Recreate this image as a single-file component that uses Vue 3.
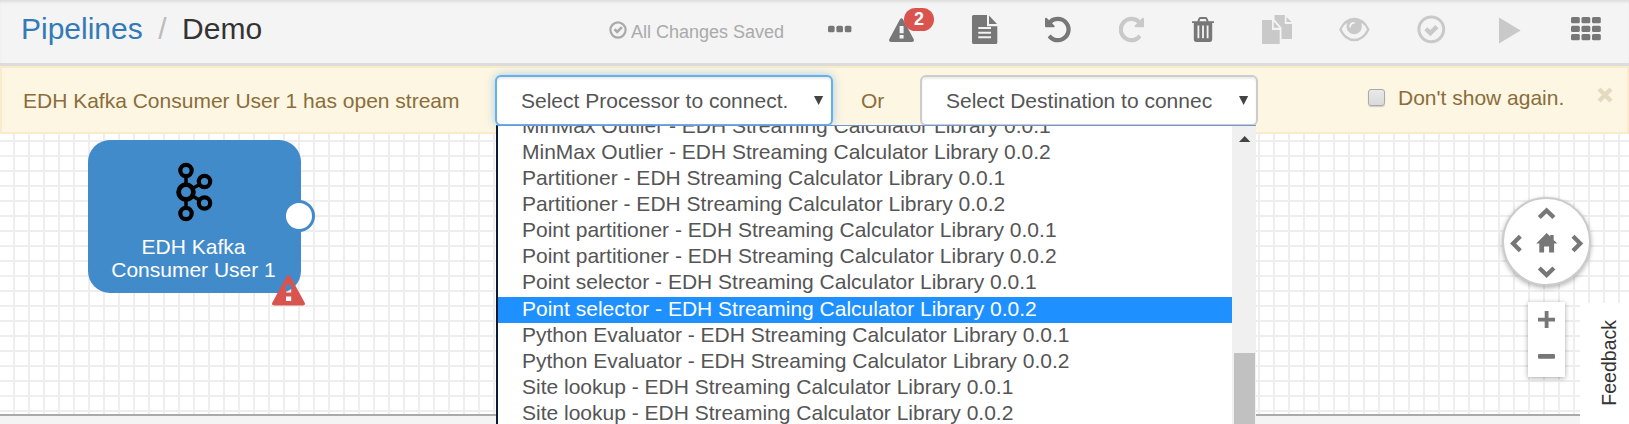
<script setup>
const options = [
  { name: 'MinMax Outlier', version: '0.0.1' },
  { name: 'MinMax Outlier', version: '0.0.2' },
  { name: 'Partitioner', version: '0.0.1' },
  { name: 'Partitioner', version: '0.0.2' },
  { name: 'Point partitioner', version: '0.0.1' },
  { name: 'Point partitioner', version: '0.0.2' },
  { name: 'Point selector', version: '0.0.1' },
  { name: 'Point selector', version: '0.0.2', selected: true },
  { name: 'Python Evaluator', version: '0.0.1' },
  { name: 'Python Evaluator', version: '0.0.2' },
  { name: 'Site lookup', version: '0.0.1' },
  { name: 'Site lookup', version: '0.0.2' },
]
const appCells = [0, 10.5, 21].flatMap((x) => [9, 17.7, 26].map((y) => ({ x, y })))
</script>

<template>
  <div class="page">
    <header class="toolbar">
      <nav class="crumbs">
        <a class="link">Pipelines</a><span class="slash">/</span><span class="current">Demo</span>
      </nav>
      <div class="saved">
        <svg width="18" height="18" viewBox="0 0 18 18"><circle cx="9" cy="9" r="7.6" fill="none" stroke="#aaa" stroke-width="2.2" /><path d="M4.6 9.2l1.9-1.9 1.7 1.7 3.8-3.7 1.8 1.8-5.6 5.6z" fill="#aaa" /></svg>
        <span>All Changes Saved</span>
      </div>
      <div class="tools">
        <svg width="24" height="40" fill="#777"><rect x="0" y="17.7" width="6.6" height="6.6" rx="1.6" /><rect x="8.4" y="17.7" width="6.6" height="6.6" rx="1.6" /><rect x="16.8" y="17.7" width="6.6" height="6.6" rx="1.6" /></svg>
        <div class="issues">
          <svg width="26" height="40"><path fill="#777" fill-rule="evenodd" d="M11 11.2q1.5-2 3 0L24.6 31q1.2 3-1.6 3H2Q-.8 34 .4 31zM10.6 18v7.2h4V18zM10.6 27v3.6h4V27z" /></svg>
          <span class="badge">2</span>
        </div>
        <svg width="26" height="40"><path fill="#777" d="M1.5 7H15v11.2h10.3v16.3q0 1.5-1.5 1.5h-22Q0 36 0 34.500V8.500Q0 7 1.500 7zM17 7.500L25 16h-8z" /><path fill="#f4f4f4" d="M6.300 19h12.700v2H6.300zM6.300 23.700h12.700v2H6.300zM6.300 28.300h12.700v2H6.300z" /></svg>
        <svg width="26" height="40"><path transform="translate(0 6.5) scale(.01674)" fill="#777" d="M1536 896q0 156-61 298t-164 245-245 164-298 61q-172 0-327-72.500t-264-204.500q-7-10-6.500-22.500t8.500-20.500l137-138q10-9 25-9 16 2 23 12 73 95 179 147t225 52q104 0 198.500-40.500t163.500-109.500 109.500-163.500 40.500-198.500-40.500-198.500-109.500-163.500-163.500-109.500-198.500-40.500q-98 0-188 35.500t-160 101.500l137 138q31 30 14 69-17 40-59 40h-448q-26 0-45-19t-19-45v-448q0-42 40-59 39-17 69 14l130 129q107-101 244.500-156.500t284.500-55.500q156 0 298 61t245 164 164 245 61 298z" /></svg>
        <svg width="26" height="40"><path transform="translate(25 6.5) scale(-.01644 .01674)" fill="#c9c9c9" d="M1536 896q0 156-61 298t-164 245-245 164-298 61q-172 0-327-72.500t-264-204.500q-7-10-6.500-22.500t8.500-20.500l137-138q10-9 25-9 16 2 23 12 73 95 179 147t225 52q104 0 198.500-40.500t163.500-109.500 109.500-163.500 40.500-198.500-40.500-198.500-109.500-163.500-163.500-109.500-198.500-40.500q-98 0-188 35.500t-160 101.500l137 138q31 30 14 69-17 40-59 40h-448q-26 0-45-19t-19-45v-448q0-42 40-59 39-17 69 14l130 129q107-101 244.500-156.500t284.500-55.500q156 0 298 61t245 164 164 245 61 298z" /></svg>
        <svg width="24" height="40"><path fill="#777" fill-rule="evenodd" d="M0 13.200h5.300l1.300-3Q7.100 9 8.500 9h5q1.400 0 1.900 1.200l1.300 3H22V15h-1.800v16q0 3-2.500 3H4.300Q1.800 34 1.800 31V15H0zM7.400 13.200h7.200l-.9-2.200H8.300zM5.500 17.500v12.800h1.800V17.500zM10.100 17.500v12.800h1.800V17.500zM14.700 17.500v12.800h1.800V17.500z" /></svg>
        <svg width="31" height="40" fill="#c9c9c9"><path d="M0 12h10v10h7.700v14H0z" /><path d="M11.700 13.500v6.300h5.600z" /><path d="M12.500 7h10.300v9H30v15H19.500V19.500l-7-8z" /><path d="M24.500 9v5h5z" /></svg>
        <svg width="31" height="40"><path fill="#c9c9c9" fill-rule="evenodd" d="M0 21.500Q5.500 9.700 15.300 9.700T30.700 21.500Q25 33.300 15.300 33.300T0 21.500zM2.700 21.500Q7.500 30.800 15.300 30.800T28 21.500Q26 17 22.300 14.700q.5 1.600.5 4a7.600 7.600 0 0 1-15.200 0q0-2.400.6-4Q4.500 17 2.700 21.500zM15 14q-4.700 0-4.700 4.500 0 .9.900.9t.9-.9q0-2.800 2.900-2.800.9 0 .9-.8T15 14z" /></svg>
        <svg width="29" height="40"><circle cx="14.300" cy="21.300" r="12.400" fill="none" stroke="#c9c9c9" stroke-width="3" /><path d="M7.300 22.200l3-3 3 2.800 5-5 3.200 3.200-8.200 8z" fill="#c9c9c9" /></svg>
        <svg width="23" height="40"><path d="M0 9.500L21.700 22.500 0 35.600z" fill="#c9c9c9" /></svg>
        <svg width="31" height="40" fill="#777"><rect v-for="(c, i) in appCells" :key="i" :x="c.x" :y="c.y" width="8.800" height="6.300" rx="1.500" /></svg>
      </div>
    </header>

    <section class="alert">
      <span class="message">EDH Kafka Consumer User 1 has open stream</span>
      <div class="select focused"><span class="value">Select Processor to connect.</span><svg class="caret" width="10" height="9"><path d="M0 0h9.200L4.600 9z" fill="#444" /></svg></div>
      <span class="or">Or</span>
      <div class="select"><span class="value">Select Destination to connec</span><svg class="caret" width="10" height="9"><path d="M0 0h9.200L4.600 9z" fill="#444" /></svg></div>
      <label class="again"><i class="box"></i><span>Don't show again.</span></label>
      <svg class="close" width="16" height="16"><path d="M2 2l12 12M14 2L2 14" stroke="#e4dac0" stroke-width="4.400" /></svg>
    </section>

    <main class="canvas">
      <div class="stage">
        <svg width="213" height="153">
          <g stroke="#000" fill="none">
            <path d="M98 37.500v35M98 52L117 41.500M98 52L117 63.500" stroke-width="3.500" />
            <g fill="#428bca" stroke-width="4.200">
              <circle cx="98" cy="30.500" r="5.700" /><circle cx="98" cy="73.500" r="5.700" /><circle cx="116.500" cy="41.500" r="5.700" /><circle cx="116.500" cy="63" r="5.700" />
              <circle cx="98" cy="52.100" r="7.400" stroke-width="4.800" />
            </g>
          </g>
        </svg>
        <div class="label">EDH Kafka<br />Consumer User 1</div>
        <i class="port"></i>
        <svg class="error" width="33" height="31"><path fill="#d9534f" fill-rule="evenodd" d="M14.600 1.500q1.900-3 3.800 0L32.600 27.500q1.400 3-1.800 3H2.200q-3.200 0-1.800-3zM14 10v7.500h5.200V10zM14 21.500V26h5.200v-4.500z" /></svg>
      </div>

      <div class="pan">
        <svg width="85" height="85" viewBox="2 2 85 85">
          <g fill="none" stroke="#777" stroke-width="4.300"><path d="M37.300 20.500l7.300-7 7.300 7M37.300 71l7.300 7 7.300-7M18.300 39.300l-7.200 7.200 7.200 7.200M71 39.300l7.200 7.200-7.200 7.200" /></g>
          <path fill="#777" d="M34.200 46.500l10.500-10.500 3.500 3.500v-1.500h3.500V43l3.600 3.500h-3.200v9h-5v-6h-5v6h-4.800v-9z" />
        </svg>
      </div>
      <div class="zoom">
        <svg width="17" height="17"><path d="M6.700 0h3.800v6.700H17v3.800h-6.500V17H6.700v-6.500H0V6.700h6.700z" fill="#777" /></svg>
        <svg width="17" height="5"><rect width="17" height="4.800" rx="1" fill="#777" /></svg>
      </div>
    </main>
    <footer class="bottom"></footer>

    <div class="menu">
      <div class="options">
        <div v-for="o in options" :key="o.name + o.version" class="option" :class="{ selected: o.selected }">{{ o.name }} - EDH Streaming Calculator Library {{ o.version }}</div>
      </div>
      <div class="scroll">
        <svg width="12" height="6"><path d="M0 6L5.700 0l5.700 6z" fill="#444" /></svg>
        <div class="thumb"></div>
      </div>
    </div>
    <div class="feedback"><span>Feedback</span></div>
  </div>
</template>

<style>
body { overflow: hidden; }
</style>

<style scoped>
* { box-sizing: border-box; }
svg { display: block; flex: none; }
.page { position: relative; width: 1629px; height: 424px; overflow: hidden; display: flex; flex-direction: column; font: 21px/30px "Liberation Sans", Arial, sans-serif; white-space: nowrap; color: #333; background: #f4f4f4; }
.toolbar { display: flex; height: 66px; flex: none; border-bottom: 3px solid #dcdcdc; background: #f4f4f4; box-shadow: inset 0 3px 3px -1px #ddd; }
.crumbs { width: 609px; padding: 9px 0 0 21px; font-size: 30px; line-height: 40px; }
.link { color: #337ab7; }
.slash { color: #bbb; margin: 0 15.5px; }
.saved { width: 219px; display: flex; padding-top: 21px; gap: 4px; color: #aaa; font-size: 18px; line-height: 22px; }
.tools { display: grid; grid-template-columns: 61px 83px 73px 74px 73px 70px 77px 78px 82px 72px 40px; padding-top: 8px; }
.issues { position: relative; }
.badge { position: absolute; left: 15px; top: 0; width: 30px; height: 23px; border-radius: 12px; background: #d9534f; color: #fff; font-size: 18px; font-weight: bold; line-height: 23px; text-align: center; }
.alert { display: flex; height: 68px; flex: none; border: 2px solid #faebcc; background: #fdf6e2; color: #8a6d3b; padding: 7px 0 0 21px; }
.message { width: 472px; padding-top: 11px; }
.select { position: relative; width: 338px; height: 51px; border: 2px solid #ccc; border-radius: 6px; background: #fff; color: #555; padding: 9px 0 0 24px; box-shadow: inset 0 2px 2px rgba(0,0,0,.075); }
.focused { border-color: #66afe9; box-shadow: inset 0 2px 2px rgba(0,0,0,.075), 0 0 10px rgba(102,175,233,.6); }
.value { display: block; }
.caret { position: absolute; right: 7px; top: 19px; }
.or { width: 87px; padding: 11px 0 0 28px; }
.again { display: flex; gap: 13px; margin-left: 110px; padding-top: 8px; width: 229px; }
.box { width: 17px; height: 17px; margin-top: 6px; border: 1px solid #aaa; border-radius: 3px; background: linear-gradient(#e9e9e9, #dadada); box-shadow: 0 1px 1px #ccc; }
.close { margin-top: 12px; }
.canvas { position: relative; height: 282px; flex: none; border-bottom: 2px solid #aaa; background: repeating-linear-gradient(90deg, transparent 0 13px, #eee 13px 15px), repeating-linear-gradient(#fff 0 6px, #eee 6px 8px, #fff 8px 15px); }
.stage { position: absolute; left: 88px; top: 6px; width: 213px; height: 153px; border-radius: 22px; background: #428bca; }
.label { position: absolute; left: 0; right: 2px; top: 95px; text-align: center; color: #fff; line-height: 23px; }
.port { position: absolute; left: 195px; top: 60px; width: 32px; height: 32px; border: 3px solid #428bca; border-radius: 50%; background: #fff; }
.error { position: absolute; left: 184px; top: 135px; }
.pan { position: absolute; left: 1502px; top: 63px; width: 89px; height: 89px; border: 2px solid #ccc; border-radius: 50%; background: #fff; box-shadow: 0 2px 5px rgba(0,0,0,.3); }
.zoom { position: absolute; left: 1528px; top: 168px; width: 37px; height: 75px; background: #fff; box-shadow: 0 1px 5px rgba(0,0,0,.35); display: flex; flex-direction: column; align-items: center; gap: 26px; padding-top: 9px; }
.bottom { flex: 1; background: #f4f4f4; }
.menu { position: absolute; left: 496px; top: 125px; width: 760px; height: 310px; display: flex; border-left: 2px solid #0c1a33; border-top: 1px solid #7296cf; background: #fff; color: #555; overflow: hidden; }
.options { flex: 1; margin-top: -12px; }
.option { height: 26px; line-height: 24px; padding-left: 24px; }
.selected { margin-top: 1px; background: #1e90ff; color: #fff; }
.scroll { width: 24px; background: #f0f0f0; padding: 10px 1px 0 2px; display: flex; flex-direction: column; gap: 211px; }
.scroll svg { margin-left: 5px; }
.thumb { flex: 1; background: #c1c1c1; }
.feedback { position: absolute; left: 1580px; top: 303px; width: 49px; height: 121px; background: #fff; display: flex; justify-content: center; align-items: center; }
.feedback span { writing-mode: vertical-rl; transform: rotate(180deg); font-size: 19.5px; margin: 0 0 2px 9px; }
</style>
